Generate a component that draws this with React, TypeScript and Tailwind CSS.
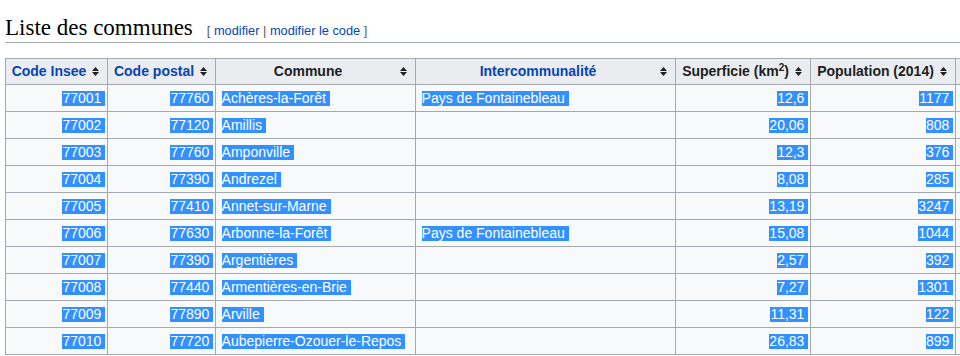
import type { ReactNode } from 'react';

type Row = {
    insee: string;
    postal: string;
    commune: string;
    interco: string;
    superficie: string;
    population: string;
};

const ROWS: Row[] = [
    { insee: '77001', postal: '77760', commune: 'Achères-la-Forêt', interco: 'Pays de Fontainebleau', superficie: '12,6', population: '1177' },
    { insee: '77002', postal: '77120', commune: 'Amillis', interco: '', superficie: '20,06', population: '808' },
    { insee: '77003', postal: '77760', commune: 'Amponville', interco: '', superficie: '12,3', population: '376' },
    { insee: '77004', postal: '77390', commune: 'Andrezel', interco: '', superficie: '8,08', population: '285' },
    { insee: '77005', postal: '77410', commune: 'Annet-sur-Marne', interco: '', superficie: '13,19', population: '3247' },
    { insee: '77006', postal: '77630', commune: 'Arbonne-la-Forêt', interco: 'Pays de Fontainebleau', superficie: '15,08', population: '1044' },
    { insee: '77007', postal: '77390', commune: 'Argentières', interco: '', superficie: '2,57', population: '392' },
    { insee: '77008', postal: '77440', commune: 'Armentières-en-Brie', interco: '', superficie: '7,27', population: '1301' },
    { insee: '77009', postal: '77890', commune: 'Arville', interco: '', superficie: '11,31', population: '122' },
    { insee: '77010', postal: '77720', commune: 'Aubepierre-Ozouer-le-Repos', interco: '', superficie: '26,83', population: '899' },
];

/** Wikipedia-style up/down sort arrows. */
function SortIcon() {
    return (
        <svg className="ml-[6px] shrink-0" width="7" height="9" viewBox="0 0 7 9" fill="#202122">
            <path d="M3.5 0L7 4H0z" />
            <path d="M0 5h7L3.5 9z" />
        </svg>
    );
}

/** Header cell: centred label with the sort icon pushed to the right edge. */
function Th({ children, link = false }: { children: ReactNode; link?: boolean }) {
    return (
        <th className="h-[26px] border border-[#a2a9b1] bg-[#eaecf0] px-[5.6px] py-0 align-middle font-bold">
            <div className="flex items-center pr-[2px]">
                <span className={`flex-1 text-center whitespace-nowrap ${link ? 'text-[#0645ad]' : 'text-[#202122]'}`}>
                    {children}
                </span>
                <SortIcon />
            </div>
        </th>
    );
}

/** Selected text chunk, as the page was captured mid-selection. */
function Sel({ children, right = false }: { children: ReactNode; right?: boolean }) {
    return (
        <span className={`inline-block bg-[#3390ff] pr-[4px] leading-[15px] text-white ${right ? '-mr-[4px]' : ''}`}>
            {children}
        </span>
    );
}

function Td({ children, right = false }: { children?: ReactNode; right?: boolean }) {
    return (
        <td className={`h-[27px] border border-[#a2a9b1] px-[5.6px] py-0 align-middle whitespace-nowrap ${right ? 'text-right' : 'text-left'}`}>
            {children ? <Sel right={right}>{children}</Sel> : null}
        </td>
    );
}

export default function App() {
    return (
        <div className="h-[356px] w-[960px] overflow-hidden bg-white pl-[5px] text-[14px] text-[#202122] [font-family:'Liberation_Sans',Arial,sans-serif]">
            {/* Section heading */}
            <h2 className="mt-[15px] flex h-[28px] items-baseline border-b border-[#a2a9b1] text-[23px] leading-[26px] font-normal text-black [font-family:'Liberation_Serif','Times_New_Roman',serif]">
                <span>Liste des communes</span>
                <span className="ml-[14px] text-[12.8px] leading-none text-[#54595d] [font-family:'Liberation_Sans',Arial,sans-serif]">
                    [ <span className="text-[#0645ad]">modifier</span> | <span className="text-[#0645ad]">modifier le code</span> ]
                </span>
            </h2>

            {/* Communes table */}
            <table className="mt-[15px] w-[1010px] table-fixed border-collapse bg-[#f8f9fa]">
                <colgroup>
                    <col className="w-[102px]" />
                    <col className="w-[108px]" />
                    <col className="w-[200px]" />
                    <col className="w-[260px]" />
                    <col className="w-[135px]" />
                    <col className="w-[145px]" />
                    <col />
                </colgroup>
                <thead>
                    <tr>
                        <Th link>Code Insee</Th>
                        <Th link>Code postal</Th>
                        <Th>Commune</Th>
                        <Th link>Intercommunalité</Th>
                        <Th>
                            Superficie (km<sup className="text-[10px]">2</sup>)
                        </Th>
                        <Th>Population (2014)</Th>
                        <th className="border border-[#a2a9b1] bg-[#eaecf0]" />
                    </tr>
                </thead>
                <tbody>
                    {ROWS.map((row) => (
                        <tr key={row.insee}>
                            <Td right>{row.insee}</Td>
                            <Td right>{row.postal}</Td>
                            <Td>{row.commune}</Td>
                            <Td>{row.interco}</Td>
                            <Td right>{row.superficie}</Td>
                            <Td right>{row.population}</Td>
                            <td className="border border-[#a2a9b1]" />
                        </tr>
                    ))}
                </tbody>
            </table>
        </div>
    );
}
